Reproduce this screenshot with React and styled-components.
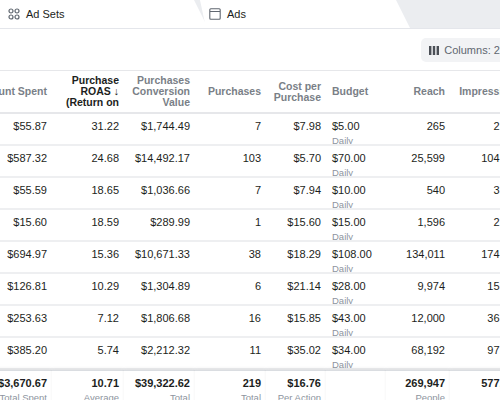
import React from "react";
import styled, { createGlobalStyle } from "styled-components";

const G = createGlobalStyle`
  body{margin:0;background:#fff;font-family:"Liberation Sans",Arial,sans-serif;overflow:hidden;}
`;
const Page = styled.div`width:500px;height:400px;overflow:hidden;position:relative;`;
const TabBar = styled.div`height:28px;background:#ebedf0;display:flex;position:relative;border-bottom:1px solid #e4e6eb;`;
const Tab = styled.div`
  position:absolute;top:0;left:${p=>p.$l}px;width:${p=>p.$w}px;height:28px;
  background:#fff;clip-path:polygon(0 0, calc(100% - 14px) 0, 100% 100%, 6px 100%);
  display:flex;align-items:center;gap:6px;padding-left:${p=>p.$pl}px;box-sizing:border-box;
  font-size:11px;color:#1c1e21;
`;
const Toolbar = styled.div`height:40px;display:flex;justify-content:flex-end;align-items:center;padding-top:1px;`;
const ColBtn = styled.div`
  margin-right:-14px;background:#f2f3f5;border-radius:5px;height:24px;padding:0 8px;
  display:flex;align-items:center;gap:5px;font-size:11px;color:#606770;
`;
const Grid = styled.div`margin-left:-46px;display:grid;grid-template-columns:98px 72px 71px 71px 60px 60px 64px 76px;`;
const Head = styled.div`
  height:44px;display:flex;align-items:center;justify-content:${p=>p.$left?"flex-start":"flex-end"};
  text-align:${p=>p.$left?"left":"right"};padding:0 5px 0 ${p=>p.$left?"6px":"0"};
  font-size:10.5px;font-weight:bold;line-height:11px;color:${p=>p.$dark?"#1c1e21":"#7a7f87"};
  border-top:1px solid #e6e7ea;border-bottom:2px solid #e6e7ea;box-sizing:border-box;white-space:nowrap;
`;
const Cell = styled.div`
  height:32px;box-sizing:border-box;padding:6px 5px 0 ${p=>p.$left?"6px":"0"};
  text-align:${p=>p.$left?"left":"right"};font-size:11px;color:#1c1e21;
  border-bottom:2px solid #eeeff1;overflow:hidden;white-space:nowrap;
`;
const Sub = styled.div`font-size:9.5px;color:#8d949e;margin-top:3px;font-weight:normal;`;
const Foot = styled.div`
  height:36px;box-sizing:border-box;padding:6px 5px 0 0;text-align:right;
  font-size:11px;font-weight:bold;color:#1c1e21;border-top:1px solid #dadde1;
  box-shadow:0 -2px 3px rgba(0,0,0,0.06);background:#fff;white-space:nowrap;
`;

const rows = [
  ["$55.87","31.22","$1,744.49","7","$7.98","$5.00","265","2,651"],
  ["$587.32","24.68","$14,492.17","103","$5.70","$70.00","25,599","104,027"],
  ["$55.59","18.65","$1,036.66","7","$7.94","$10.00","540","3,012"],
  ["$15.60","18.59","$289.99","1","$15.60","$15.00","1,596","2,241"],
  ["$694.97","15.36","$10,671.33","38","$18.29","$108.00","134,011","174,958"],
  ["$126.81","10.29","$1,304.89","6","$21.14","$28.00","9,974","15,187"],
  ["$253.63","7.12","$1,806.68","16","$15.85","$43.00","12,000","36,712"],
  ["$385.20","5.74","$2,212.32","11","$35.02","$34.00","68,192","97,305"],
];
const foot = [["$3,670.67","Total Spent"],["10.71","Average"],["$39,322.62","Total"],["219","Total"],["$16.76","Per Action"],["",""],["269,947","People"],["577,493","Total"]];
const heads = [["Amount Spent"],["Purchase","ROAS ↓","(Return on"],["Purchases","Conversion","Value"],["Purchases"],["Cost per","Purchase"],["Budget"],["Reach"],["Impressions"]];

export default function App(){
  return <Page><G/>
    <TabBar>
      <Tab $l={-6} $w={214} $pl={14}>
        <svg width="12" height="12" viewBox="0 0 12 12" fill="none" stroke="#606770" strokeWidth="1.2"><rect x="1" y="1" width="4" height="4" rx="2"/><rect x="7" y="1" width="4" height="4" rx="2"/><rect x="1" y="7" width="4" height="4" rx="2"/><rect x="7" y="7" width="4" height="4" rx="2"/></svg>
        Ad Sets
      </Tab>
      <Tab $l={200} $w={210} $pl={9}>
        <svg width="12" height="12" viewBox="0 0 12 12" fill="none" stroke="#606770" strokeWidth="1.1"><rect x="0.8" y="0.8" width="10.4" height="10.4" rx="1"/><line x1="1" y1="3.5" x2="11" y2="3.5"/></svg>
        Ads
      </Tab>
    </TabBar>
    <Toolbar><ColBtn>
      <svg width="10" height="9" viewBox="0 0 10 9" fill="#4b4f56"><rect x="0" y="0" width="2.4" height="9"/><rect x="3.8" y="0" width="2.4" height="9"/><rect x="7.6" y="0" width="2.4" height="9"/></svg>
      Columns: 22
    </ColBtn></Toolbar>
    <Grid>
      {heads.map((h,i)=><Head key={i} $left={i===5} $dark={i===1}><div>{h.map((l,j)=><div key={j}>{l}</div>)}</div></Head>)}
      {rows.map((r,ri)=>r.map((v,i)=><Cell key={ri+"-"+i} $left={i===5}>{v}{i===5&&<Sub>Daily</Sub>}</Cell>))}
      {foot.map((f,i)=><Foot key={i}>{f[0]}<Sub>{f[1]}</Sub></Foot>)}
    </Grid>
  </Page>;
}
